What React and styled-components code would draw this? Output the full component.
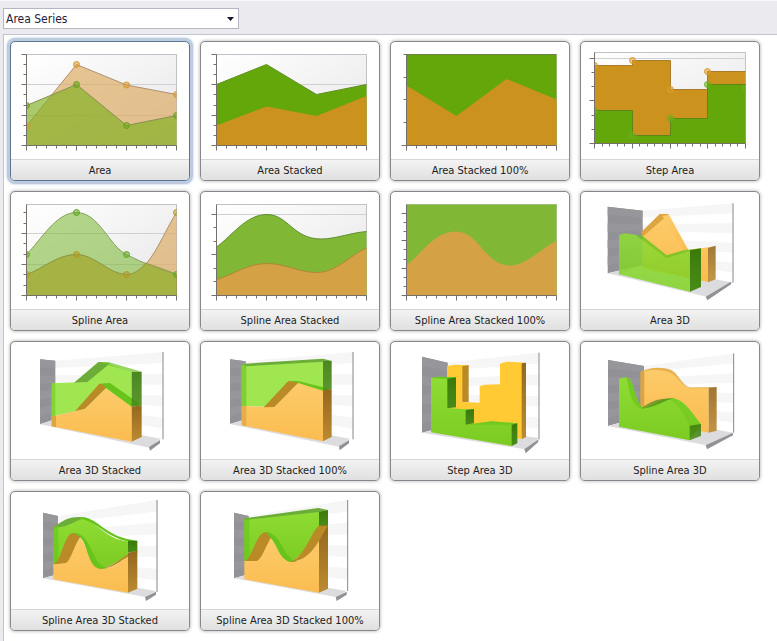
import React, { useState } from 'react';
import styled, { createGlobalStyle } from 'styled-components';

const GlobalStyle = createGlobalStyle`
  * {
    box-sizing: border-box;
  }

  body {
    margin: 0;
    background: #ebebef;
    color: #1c1c1c;
    font-family: 'DejaVu Sans Condensed', 'Noto Sans', sans-serif;
    font-size: 11px;
  }
`;

const Page = styled.div`
  display: flex;
  flex-direction: column;
  min-height: 100vh;
  padding-left: 3px;
  border-top: 1px solid #f8f8fa;
`;

const Toolbar = styled.div`
  padding: 7px 0 5px;
`;

const SelectBox = styled.div`
  position: relative;
  width: 236px;
`;

const Select = styled.select`
  display: block;
  appearance: none;
  width: 100%;
  height: 21px;
  padding: 1px 20px 0 2px;
  border: 1px solid #b4b6c4;
  border-radius: 0;
  background: #fff;
  color: #1e1e3c;
  font-family: inherit;
  font-size: 12px;
  line-height: 18px;
`;

const Arrow = styled.svg`
  position: absolute;
  top: 9px;
  right: 5px;
  width: 7px;
  height: 4px;
  pointer-events: none;
`;

const Panel = styled.main`
  flex: 1;
  padding: 6px;
  border-top: 1px solid #c0c4ce;
  border-left: 1px solid #c0c4ce;
  background: #fff;
`;

const Gallery = styled.div`
  display: grid;
  grid-template-columns: repeat(auto-fill, 180px);
  gap: 10px;
`;

const Card = styled.button`
  display: flex;
  flex-direction: column;
  height: 140px;
  padding: 0;
  overflow: hidden;
  border: 1px solid ${({ $selected }) => $selected ? '#5d7594' : '#88888c'};
  border-radius: 5px;
  background: #fff;
  box-shadow: ${({ $selected }) => $selected
    ? '0 0 0 3px #bccbde, 0 0 2px 4px #dbe4ee'
    : '0 0 3px 1px rgba(0, 0, 0, 0.2)'};
  color: inherit;
  font: inherit;
  cursor: pointer;
`;

const Picture = styled.svg`
  display: block;
  flex: 1;
  width: 100%;
  min-height: 0;
`;

const Caption = styled.span`
  width: 100%;
  height: 21px;
  border-top: 1px solid #d6d6d6;
  background: linear-gradient(#f3f3f3, #e0e0e0);
  line-height: 22px;
  text-align: center;
`;

const GREEN = '#64a70b';
const ORANGE = '#cc921e';

const frame = { left: 15.5, top: 12.5, right: 165.5, bottom: 103.5 };
const stepFrame = { left: 13.5, top: 10.5, right: 164.5, bottom: 101.5 };

// flat charts are drawn in pixels, the 3D ones at three units to the pixel
const Plot = ({ box = frame, columns = 3, major = [], minor = [], grid = [], children }) => {
  const { left, top, right, bottom } = box;
  const step = (right - left) / (columns * 5);
  const ticks = Array.from({ length: columns * 5 + 1 }, (_, i) => (
    `M${Math.floor(left + i * step) + 0.5} ${bottom}v${i % 5 === 0 ? 5 : 3}`
  ));

  return (
    <Picture viewBox="0 0 178 117" aria-hidden="true">
      <defs>
        <linearGradient id="plotFill" x1="0" y1="0" x2="1" y2="1">
          <stop offset="0" stopColor="#fff" />
          <stop offset="1" stopColor="#e6e6e8" />
        </linearGradient>
      </defs>
      <rect x={left} y={top} width={right - left} height={bottom - top} fill="url(#plotFill)" stroke="#c0c0c6" />
      {grid.map((y) => <path key={y} d={`M${left} ${y}H${right}`} stroke="#d0d0d4" />)}
      {children}
      <g fill="none" stroke="#77706a">
        <path d={`M${left} ${top}V${bottom}H${right}`} />
        <path d={[...major, bottom].map((y) => `M${left - 5} ${y}h5`).join('')} />
        <path d={minor.map((y) => `M${left - 3} ${y}h3`).join('')} />
        <path d={ticks.join('')} />
      </g>
    </Picture>
  );
};

const Series = ({ line, color, box = frame, opacity = 1, stroke = 'none' }) => (
  <g>
    <path d={`${line}V${box.bottom}H${box.left}Z`} fill={color} fillOpacity={opacity} />
    <path d={line} fill="none" stroke={stroke} />
  </g>
);

const Markers = ({ points, color, clip = frame }) => (
  <svg x={clip.left} y="0" width={clip.right - clip.left} height="117" viewBox={`${clip.left} 0 ${clip.right - clip.left} 117`}>
    {points.map(([x, y]) => (
      <circle key={x} cx={x} cy={y} r="3" fill={color} fillOpacity="0.55" stroke={color} />
    ))}
  </svg>
);

const areaAxis = {
  major: [12.5, 42.5, 73.5],
  minor: [22.5, 32.5, 52.5, 63.5, 83.5, 93.5],
  grid: [42.5, 73.5],
};

const AreaChart = () => (
  <Plot {...areaAxis}>
    <Series line="M15.5 84L65.5 22.5L115.5 43L165.5 52.5" color="#dba85a" opacity={0.65} stroke="#b09070" />
    <Series line="M15.5 63.5L65.5 42.5L115.5 83.5L165.5 73.5" color="#80b020" opacity={0.65} stroke="#8a8f50" />
    <Markers points={[[15.5, 84], [65.5, 22.5], [115.5, 43], [165.5, 52.5]]} color="#d89a30" />
    <Markers points={[[15.5, 63.5], [65.5, 42.5], [115.5, 83.5], [165.5, 73.5]]} color="#6aa41c" />
  </Plot>
);

const AreaStacked = () => (
  <Plot {...areaAxis}>
    <Series line="M15.5 42.5L65.5 22.5L115.5 52.5L165.5 42.5" color={GREEN} stroke="#5f8f20" />
    <Series line="M15.5 83.5L65.5 64.5L115.5 74L165.5 54" color={ORANGE} />
  </Plot>
);

const AreaStackedFull = () => (
  <Plot minor={[12.5, 35.5, 57.5, 80.5]}>
    <Series line="M15.5 12.5H165.5" color={GREEN} stroke="#6f7f50" />
    <Series line="M15.5 43.5L65.5 74L115.5 37L165.5 57.5" color={ORANGE} />
  </Plot>
);

const StepArea = () => (
  <Plot box={stepFrame} columns={4} major={[16.5, 58.5]} minor={[30.5, 44.5, 73.5, 87.5]} grid={[16.5]}>
    <Series box={stepFrame} line="M13.5 23.5H51.5V18.5H89.5V47.5H126.5V29.5H164.5" color={ORANGE} stroke="#a87c28" />
    <Series box={stepFrame} line="M13.5 68.5H51.5V93.5H89.5V76.5H126.5V42.5H164.5" color={GREEN} stroke="#5f8418" />
    <Markers clip={stepFrame} points={[[13.5, 23.5], [51.5, 18.5], [89.5, 47.5], [126.5, 29.5]]} color="#dc9a28" />
    <Markers clip={stepFrame} points={[[13.5, 68.5], [51.5, 93.5], [89.5, 76.5], [126.5, 42.5], [164.5, 46.5]]} color="#6cb01c" />
  </Plot>
);

const SplineArea = () => (
  <Plot major={[41.5, 72.5]} minor={[20.5, 31.5, 51.5, 62.5, 82.5, 93.5]} grid={[41.5, 72.5]}>
    <Series line="M15.5 82.5C32 77 46 62.5 65.5 62.5C84 62.5 98 82.5 115.5 82.5C138 82.5 150 45 165.5 20.5" color="#dba85a" opacity={0.65} stroke="#b09070" />
    <Series line="M15.5 62.5C30 48 45 20.5 65.5 20.5C88 20.5 98 54 115.5 62.5C133 72 150 77 165.5 82.5" color="#78b62c" opacity={0.55} stroke="#86a05c" />
    <path d="M15.5 82.5C32 77 46 62.5 65.5 62.5C84 62.5 98 82.5 115.5 82.5C124 82.5 130 76 134.5 71C146 75 156 78 165.5 82.5V103.5H15.5Z" fill="#a3ac30" fillOpacity="0.5" stroke="#8c8c48" strokeOpacity="0.6" />
    <Markers points={[[15.5, 82.5], [65.5, 62.5], [115.5, 82.5], [165.5, 20.5]]} color="#b09a28" />
    <Markers points={[[15.5, 62.5], [65.5, 20.5], [115.5, 62.5], [165.5, 82.5]]} color="#62aa20" />
  </Plot>
);

const SplineStacked = () => (
  <Plot major={[22.5, 62.5]} minor={[35.5, 49.5, 76.5, 89.5]} grid={[22.5]}>
    <Series line="M15.5 55C32 43 45 22.5 66 22.5C87 22.5 92 47 120 47C135 47 148 41 165.5 39.5" color="#80b735" stroke="#5f8f34" />
    <Series line="M15.5 87.5C32 83 46 71.5 66 71.5C84 71.5 98 80.5 115.5 80.5C135 80.5 148 64 165.5 56" color="#d4a244" stroke="#b08838" />
  </Plot>
);

const SplineStackedFull = () => (
  <Plot major={[21.5, 48.5, 76.5]} minor={[30.5, 39.5, 57.5, 67.5, 85.5, 94.5]}>
    <Series line="M15.5 12.5H165.5" color="#80b735" />
    <Series line="M15.5 73.5C32 60 44 39.5 65 39.5C88 39.5 94 73.5 119 73.5C135 73.5 148 58 165.5 48.5" color="#d4a244" />
  </Plot>
);

// [x, top, bottom] of the wall's near and far edges and of the room's right edge
const Room = ({ near, far, right, floor, edge, viewBox = '18 18 534 351', children }) => {
  const bands = 8;
  const at = ([, top, bottom], i) => top + ((bottom - top) * i) / bands;
  const band = (a, b, i) => (
    `${a[0]},${at(a, i)} ${b[0]},${at(b, i)} ${b[0]},${at(b, i + 1)} ${a[0]},${at(a, i + 1)}`
  );
  const wall = `${near[0]},${near[1]} ${far[0]},${far[1]} ${far[0]},${far[2]} ${near[0]},${near[2]}`;

  return (
    <Picture viewBox={viewBox} aria-hidden="true">
      <defs>
        <linearGradient id="roomOrange" x1="0" y1="0" x2="0" y2="1">
          <stop offset="0" stopColor="#fccb6a" />
          <stop offset="1" stopColor="#fbbc50" />
        </linearGradient>
        <linearGradient id="roomGreen" x1="0" y1="0" x2="0" y2="1">
          <stop offset="0" stopColor="#8edc34" />
          <stop offset="1" stopColor="#7ccb22" />
        </linearGradient>
        <linearGradient id="roomBrown" x1="0" y1="0" x2="0" y2="1">
          <stop offset="0" stopColor="#94681e" />
          <stop offset="1" stopColor="#bc8a30" />
        </linearGradient>
        <linearGradient id="roomDark" x1="0" y1="0" x2="0" y2="1">
          <stop offset="0" stopColor="#3a7a0a" />
          <stop offset="1" stopColor="#4a8c18" />
        </linearGradient>
      </defs>
      <polygon points={wall} fill="#929296" />
      {Array.from({ length: bands }, (_, i) => i % 2 === 0 && (
        <g key={i}>
          <polygon points={band(far, right, i)} fill="#f6f6f7" />
          <polygon points={band(near, far, i)} fill="#97979b" />
        </g>
      ))}
      <polygon points={floor} fill="#dcdcde" />
      <polygon points={edge} fill="#929296" />
      <path d={`M${right[0]} ${right[1]}V${right[2]}`} stroke="#88888c" strokeWidth="3" />
      {children}
    </Picture>
  );
};

const Face = ({ d, tone, opacity }) => {
  const fills = {
    orange: 'url(#roomOrange)',
    green: 'url(#roomGreen)',
    brown: 'url(#roomBrown)',
    dark: 'url(#roomDark)',
    gold: '#dca542',
    ochre: '#b98a26',
    yellow: '#ffca34',
    lime: '#a0e650',
    leaf: '#66c41a',
    moss: '#6cac38',
  };
  return <path d={d} fill={fills[tone]} fillOpacity={opacity} />;
};

const Area3D = () => (
  <Room
    near={[98, 62, 262]} far={[203, 74, 238]} right={[474, 52, 290]}
    floor="98,262 203,238 474,290 398,333" edge="392,332 468,287 468,295 397,343"
  >
    <Face tone="orange" d="M203 150L275 86L335 192L400 184V288L203 250Z" />
    <Face tone="gold" d="M199 138L254 84H282L203 152Z" />
    <Face tone="orange" d="M262 90L282 86L340 192H328Z" />
    <Face tone="brown" d="M399 185L422 179V280L399 289Z" opacity={0.88} />
    <Face tone="green" d="M132 147L148 142L182 146L275 216L345 193V317L132 265Z" opacity={0.86} />
    <Face tone="leaf" d="M182 146L203 150L275 208L325 193L378 187L345 194L275 217Z" opacity={0.8} />
    <Face tone="lime" d="M132 265L193 240L345 276V317Z" opacity={0.25} />
    <Face tone="dark" d="M345 193L378 187V303L345 317Z" />
  </Room>
);

const Area3DStacked = () => (
  <Room
    viewBox="33 18 534 351"
    near={[120, 70, 265]} far={[166, 74, 250]} right={[489, 48, 310]}
    floor="120,265 166,250 482,308 448,335" edge="447,333 480,312 480,322 450,344"
  >
    <Face tone="lime" d="M155 142L255 138L323 85L395 107V212L318 156L255 218L155 242Z" />
    <Face tone="moss" d="M222 140L295 78L332 80L262 138Z" />
    <Face tone="leaf" d="M295 78L332 80L425 107H395L323 87Z" opacity={0.7} />
    <Face tone="leaf" d="M155 142H166V240L155 242Z" opacity={0.5} />
    <Face tone="orange" d="M155 242L255 218L318 156L395 212V317L155 271Z" />
    <Face tone="ochre" d="M155 242L225 226L298 143H330L318 156L255 218Z" />
    <Face tone="leaf" d="M305 143L330 141L425 208L395 212L318 156Z" />
    <Face tone="gold" d="M155 242L168 239V274L155 271Z" />
    <Face tone="dark" d="M395 107H425V208L395 212Z" opacity={0.9} />
    <Face tone="brown" d="M395 212L425 208V303L395 317Z" />
  </Room>
);

const Area3DStackedFull = () => (
  <Room
    near={[105, 70, 264]} far={[152, 76, 250]} right={[474, 48, 310]}
    floor="105,264 152,250 464,308 432,332" edge="432,331 462,312 462,322 434,343"
  >
    <Face tone="lime" d="M140 88L384 72V160L310 138L238 213L140 210Z" />
    <Face tone="moss" d="M150 83L384 68L408 74L384 77L150 91Z" />
    <Face tone="leaf" d="M140 84H154V211H140Z" opacity={0.6} />
    <Face tone="orange" d="M140 210L238 213L310 138L384 160V316L140 268Z" />
    <Face tone="ochre" d="M206 214L280 135L312 138L238 213Z" />
    <Face tone="leaf" d="M282 134L312 136L410 160L384 164L310 141Z" />
    <Face tone="gold" d="M140 210H154V271L140 268Z" opacity={0.7} />
    <Face tone="dark" d="M384 76L410 74V160L384 163Z" opacity={0.9} />
    <Face tone="brown" d="M384 163L410 160V303L384 316Z" />
  </Room>
);

const StepArea3D = () => (
  <Room
    near={[111, 62, 290]} far={[188, 80, 270]} right={[462, 50, 310]}
    floor="111,290 188,270 462,306 420,340" edge="418,340 460,310 460,318 422,352"
  >
    <Face tone="yellow" d="M186 90L210 86L251 88L232 198L284 200V150L300 146L345 145V83L365 77L423 80L410 309L186 280Z" />
    <Face tone="ochre" d="M232 90L251 88V198H232Z" />
    <Face tone="brown" d="M410 82L423 80V304L410 309Z" />
    <Face tone="green" d="M138 126L160 122L213 124L187 216L242 220L267 219L242 266L320 256L397 262L380 330L138 289Z" />
    <Face tone="leaf" d="M138 126L160 122L213 124L187 128Z" />
    <Face tone="leaf" d="M242 266L320 256L397 262L380 266Z" opacity={0.6} />
    <Face tone="dark" d="M187 128L213 124V214L187 217Z" />
    <Face tone="dark" d="M242 222L267 219V262L242 266Z" />
    <Face tone="dark" d="M380 266L397 262V322L380 330Z" />
  </Room>
);

const Spline3D = () => (
  <Room
    near={[99, 72, 270]} far={[207, 90, 240]} right={[476, 52, 290]}
    floor="99,270 207,240 474,290 394,328" edge="392,328 474,290 474,298 396,340"
  >
    <Face tone="orange" d="M198 107C225 94 265 90 295 108C315 124 325 156 345 156H401V290L198 250Z" />
    <Face tone="gold" d="M198 107C225 92 265 92 290 102C310 114 322 148 345 154L425 153L401 157H345C318 152 305 112 280 108C250 98 225 100 198 107Z" opacity={0.7} />
    <Face tone="gold" d="M196 108L208 102V215L196 208Z" />
    <Face tone="brown" d="M401 155L425 153V284L401 290Z" opacity={0.9} />
    <Face tone="green" d="M132 128L152 124C182 130 174 196 207 217C238 205 255 190 290 187C330 188 352 234 378 264L344 313L132 272Z" />
    <Face tone="dark" d="M198 218C225 198 245 186 300 187C262 193 245 216 198 218Z" opacity={0.65} />
    <Face tone="leaf" d="M278 187C325 180 350 234 378 264L344 269C330 246 315 204 278 187Z" opacity={0.4} />
    <Face tone="leaf" d="M152 124C182 130 174 196 207 217H196C160 200 164 142 152 124Z" opacity={0.7} />
    <Face tone="dark" d="M344 269L378 264V300L344 313Z" opacity={0.85} />
  </Room>
);

const Spline3DStacked = () => (
  <Room
    viewBox="33 18 534 351"
    near={[129, 80, 277]} far={[174, 90, 265]} right={[471, 42, 318]}
    floor="129,277 174,265 468,315 436,333" edge="435,333 468,317 468,326 438,345"
  >
    <Face tone="green" d="M162 125C195 100 230 94 260 100C310 130 330 162 384 166V212L310 248L240 152L198 230L160 235Z" />
    <Face tone="moss" d="M168 120C190 98 225 88 258 95C228 100 205 126 162 124Z" />
    <Face tone="leaf" d="M240 94C295 90 310 154 412 164L384 166C320 154 290 106 240 98Z" />
    <Face tone="leaf" d="M162 122L175 114V234H162Z" opacity={0.6} />
    <Face tone="orange" d="M160 235L198 230L240 152C265 190 275 246 310 248C345 245 365 222 384 212V320L160 280Z" />
    <Face tone="ochre" d="M163 235C188 215 190 155 215 142C225 140 240 143 247 152L238 156C222 182 212 222 198 231Z" />
    <Face tone="leaf" d="M218 141C275 138 272 232 322 247L300 249C262 240 265 178 240 152Z" />
    <Face tone="ochre" d="M300 249C350 240 370 205 412 193V200L384 212C360 225 345 245 300 249Z" />
    <Face tone="dark" d="M384 164H412V195L384 200Z" />
    <Face tone="brown" d="M384 200L412 195V308L384 320Z" />
  </Room>
);

const Spline3DStackedFull = () => (
  <Room
    viewBox="603 18 534 351"
    near={[702, 80, 277]} far={[746, 90, 265]} right={[1043, 42, 315]}
    floor="702,277 746,265 1040,315 1008,333" edge="1007,333 1040,317 1040,326 1010,345"
  >
    <Face tone="green" d="M733 98L957 70V162L875 228L812 155L770 224L733 226Z" />
    <Face tone="moss" d="M733 97L955 66L984 72L957 78L733 102Z" />
    <Face tone="leaf" d="M733 98L748 96V226H733Z" opacity={0.6} />
    <Face tone="orange" d="M733 225L770 224L812 155C835 190 850 228 878 228C915 225 930 180 957 160V320L733 280Z" />
    <Face tone="ochre" d="M735 225C760 212 768 140 797 138C807 138 817 144 820 152L812 156C795 185 785 220 770 225Z" />
    <Face tone="leaf" d="M795 138C850 144 845 214 892 228H868C838 215 835 186 812 155Z" />
    <Face tone="dark" d="M957 77L984 72V120L957 123Z" />
    <Face tone="brown" d="M957 120L984 118V308L957 320Z" />
    <Face tone="ochre" d="M868 228C915 214 930 142 957 119H984C958 158 935 226 868 228Z" />
  </Room>
);

const seriesTypes = [
  { title: 'Area', Chart: AreaChart },
  { title: 'Area Stacked', Chart: AreaStacked },
  { title: 'Area Stacked 100%', Chart: AreaStackedFull },
  { title: 'Step Area', Chart: StepArea },
  { title: 'Spline Area', Chart: SplineArea },
  { title: 'Spline Area Stacked', Chart: SplineStacked },
  { title: 'Spline Area Stacked 100%', Chart: SplineStackedFull },
  { title: 'Area 3D', Chart: Area3D },
  { title: 'Area 3D Stacked', Chart: Area3DStacked },
  { title: 'Area 3D Stacked 100%', Chart: Area3DStackedFull },
  { title: 'Step Area 3D', Chart: StepArea3D },
  { title: 'Spline Area 3D', Chart: Spline3D },
  { title: 'Spline Area 3D Stacked', Chart: Spline3DStacked },
  { title: 'Spline Area 3D Stacked 100%', Chart: Spline3DStackedFull },
];

const App = () => {
  const [selected, setSelected] = useState('Area');

  return (
    <>
      <GlobalStyle />
      <Page>
        <Toolbar>
          <SelectBox>
            <Select aria-label="Series group">
              <option>Area Series</option>
            </Select>
            <Arrow viewBox="0 0 7 4" aria-hidden="true">
              <path d="M0 0H7L3.5 4Z" fill="#14142c" />
            </Arrow>
          </SelectBox>
        </Toolbar>
        <Panel>
          <Gallery>
            {seriesTypes.map(({ title, Chart }) => (
              <Card
                key={title}
                type="button"
                $selected={title === selected}
                aria-pressed={title === selected}
                onClick={() => setSelected(title)}
              >
                <Chart />
                <Caption>{title}</Caption>
              </Card>
            ))}
          </Gallery>
        </Panel>
      </Page>
    </>
  );
};

export default App;
